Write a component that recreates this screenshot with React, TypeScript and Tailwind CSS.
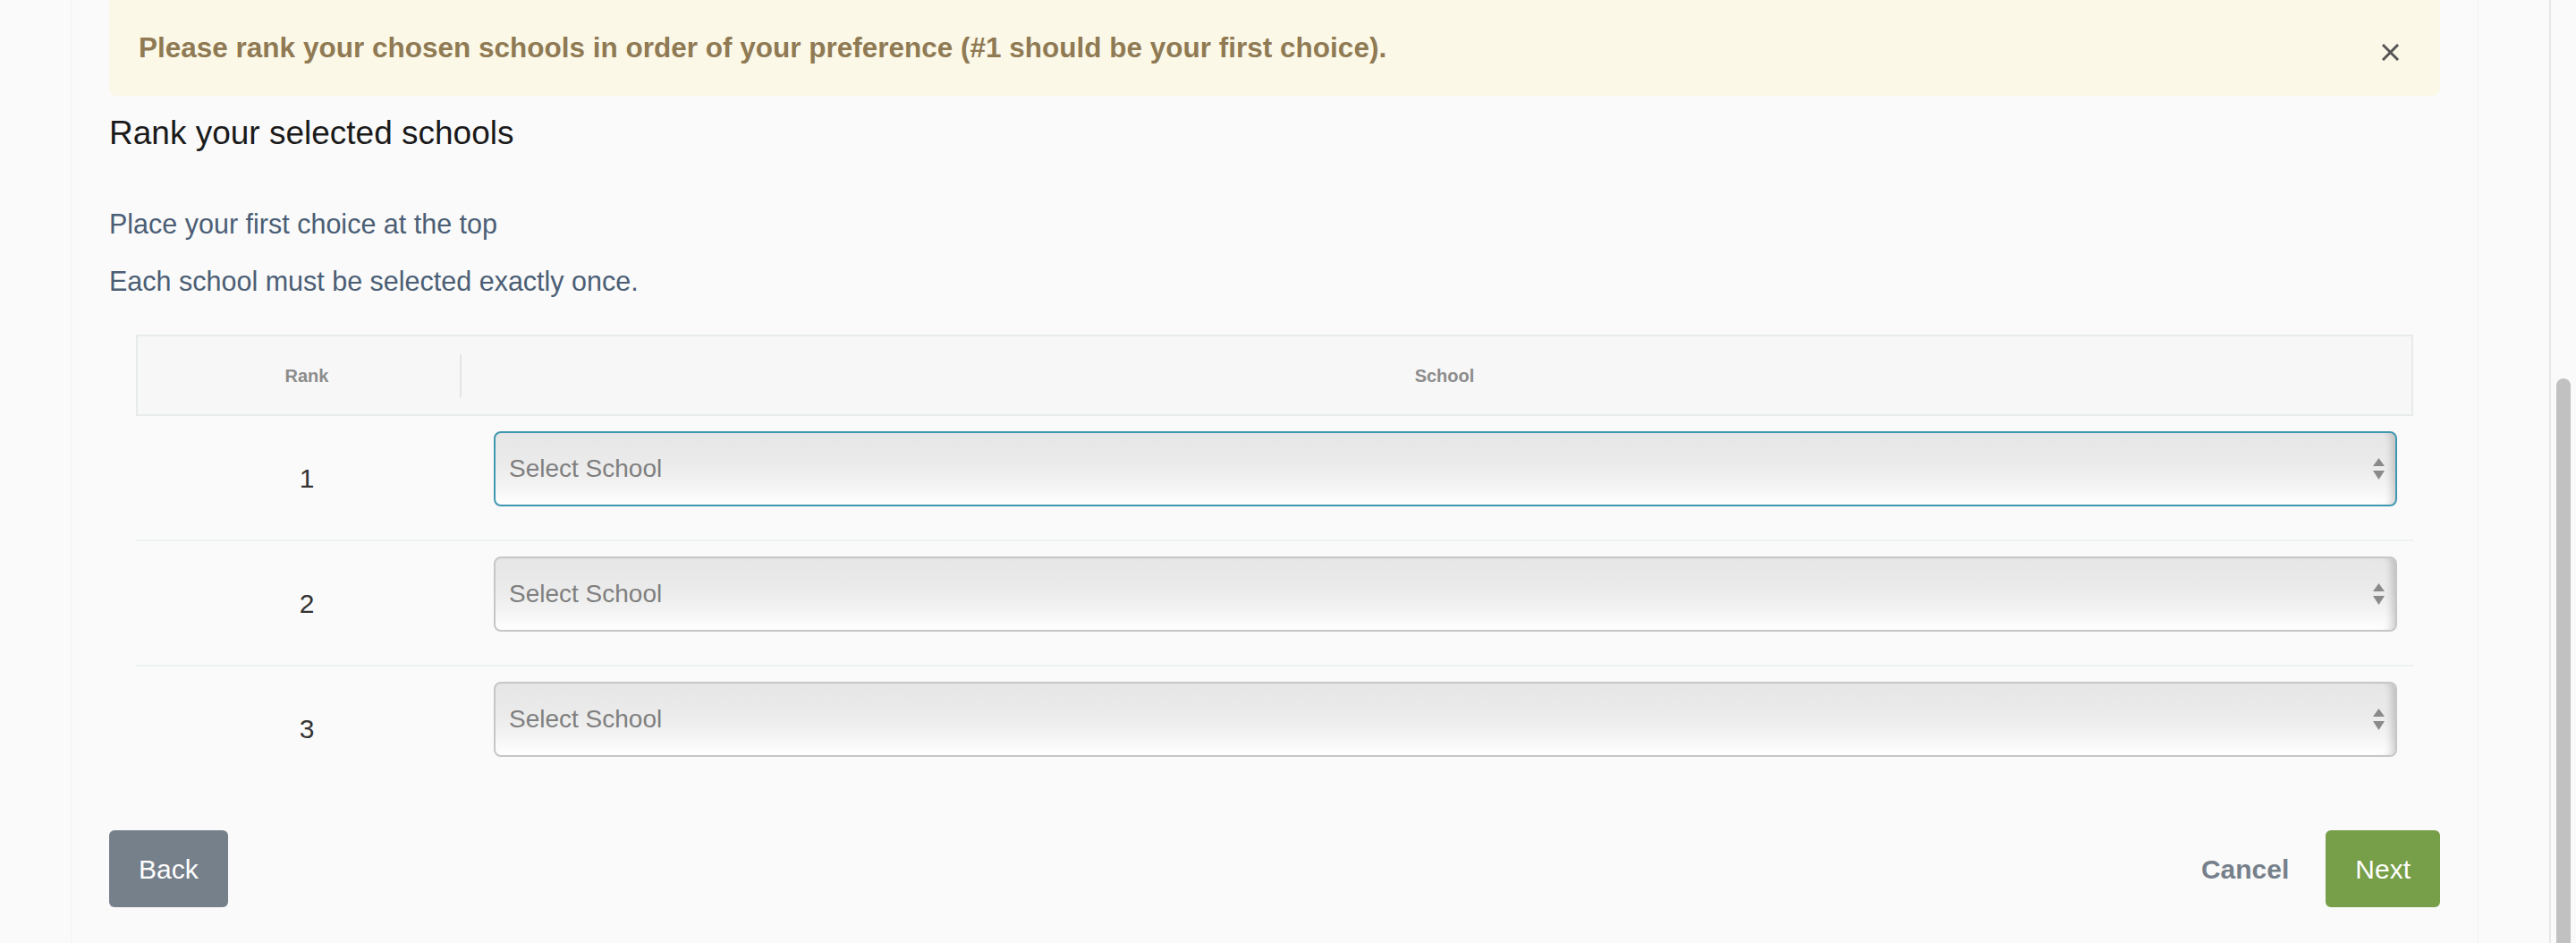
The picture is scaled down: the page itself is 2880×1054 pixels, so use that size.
import React from 'react';

const ranks: number[] = [1, 2, 3];

const SelectArrows: React.FC = () => (
  <svg width="13" height="24" viewBox="0 0 13 24" className="shrink-0">
    <polygon points="6.5,0 13,9 0,9" fill="#8a8a8a" />
    <polygon points="0,14 13,14 6.5,24" fill="#8a8a8a" />
  </svg>
);

const SchoolSelect: React.FC<{ focused?: boolean }> = ({ focused }) => (
  <div
    className={`h-[84px] flex items-center justify-between pl-[15px] pr-[12px] rounded-[8px] border-2 bg-[linear-gradient(to_bottom,#e6e6e6_0%,#ebebeb_45%,#f4f4f4_75%,#ffffff_100%)] shadow-[inset_-10px_0_8px_-6px_rgba(0,0,0,0.18)] ${
      focused ? 'border-[#3f98b1]' : 'border-[#c6c6c6]'
    }`}
  >
    <span className="text-[28px] text-[#7f7f7f]">Select School</span>
    <SelectArrows />
  </div>
);

const App: React.FC = () => {
  return (
    <div className="h-[1054px] overflow-hidden flex bg-[#fafafa] font-['Liberation_Sans',Arial,sans-serif]">
      <main className="flex-1 px-[79px]">
        <div className="h-full border-x border-[#f3f3f3] px-[42px]">
          {/* warning banner */}
          <div className="h-[107px] flex items-center justify-between pl-[33px] pr-[46px] bg-[#fcf8e7] rounded-b-[8px]">
            <p className="text-[31.5px] font-bold text-[#8f7a54]">
              Please rank your chosen schools in order of your preference (#1 should be your first choice).
            </p>
            <svg width="19" height="19" viewBox="0 0 19 19" className="mt-[9px]">
              <path d="M2 2L17 17M17 2L2 17" stroke="#555555" strokeWidth="3" strokeLinecap="square" />
            </svg>
          </div>

          <h2 className="mt-[22px] text-[37px] leading-[40px] font-normal text-[#1a1a1a]">Rank your selected schools</h2>

          <p className="mt-[59px] text-[30.5px] leading-[44px] text-[#4b5e75]">Place your first choice at the top</p>
          <p className="mt-[20px] text-[30.5px] leading-[44px] text-[#4b5e75]">Each school must be selected exactly once.</p>

          <div className="mx-[30px] mt-[38px]">
            <div className="h-[91px] flex items-center bg-[#f7f7f7] border-2 border-[#e8ebeb]">
              <div className="w-[360px] pl-[18px] text-center text-[20px] font-bold text-[#8c8c8c]">Rank</div>
              <div className="w-[2px] h-[48px] bg-[#e4e4e4]" />
              <div className="w-[18px]" />
              <div className="flex-1 text-center text-[20px] font-bold text-[#8c8c8c]">School</div>
            </div>

            {ranks.map((rank) => (
              <div
                key={rank}
                className={`flex items-center ${rank < ranks.length ? 'border-b-2 border-[#eef1f1]' : ''}`}
              >
                <div className="w-[382px] text-center text-[30px] text-[#333333]">{rank}</div>
                <div className="flex-1 pl-[18px] pr-[18px] pt-[17px] pb-[37px]">
                  <SchoolSelect focused={rank === 1} />
                </div>
              </div>
            ))}
          </div>

          <div className="mt-[45px] flex items-center justify-between">
            <button className="h-[86px] px-[33px] rounded-[6px] bg-[#76808b] text-white text-[30px]">Back</button>
            <div className="flex items-center gap-[41px]">
              <span className="text-[30px] font-bold text-[#76808b]">Cancel</span>
              <button className="h-[86px] px-[33px] rounded-[6px] bg-[#779e48] text-white text-[30px]">Next</button>
            </div>
          </div>
        </div>
      </main>

      {/* scrollbar */}
      <div className="w-[30px] border-l-2 border-[#e6e6e6] bg-[#fafafa] pl-[6px] pt-[423px]">
        <div className="w-[16px] h-full rounded-t-full bg-[#c1c1c1]" />
      </div>
    </div>
  );
};

export default App;
